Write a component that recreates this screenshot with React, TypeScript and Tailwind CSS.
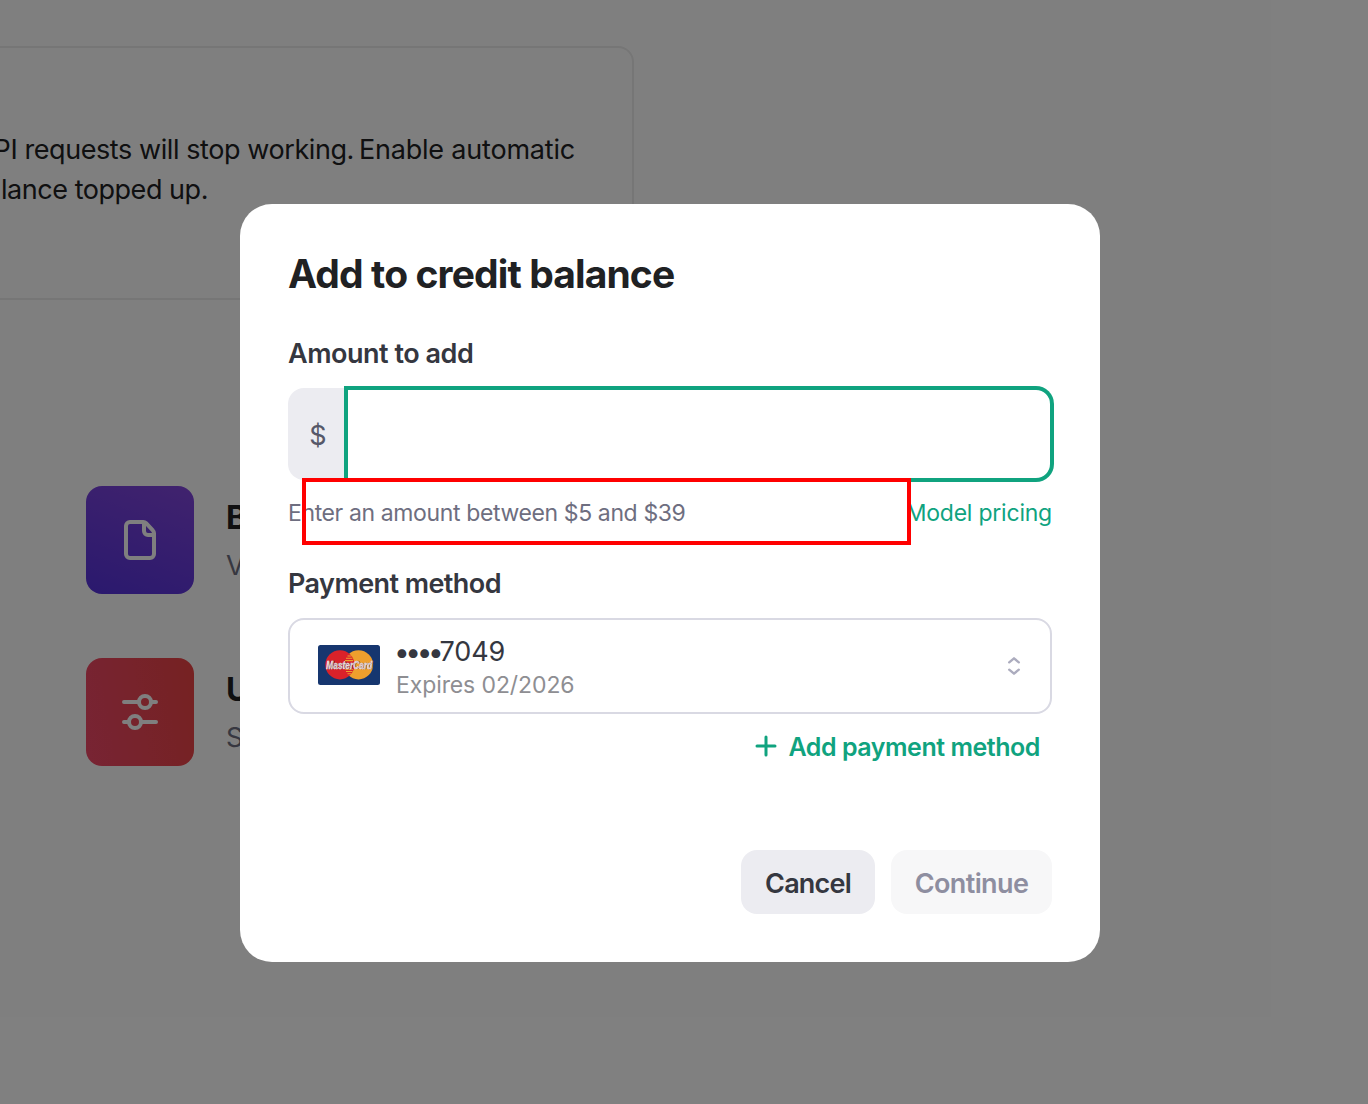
function FileIcon() {
  return (
    <svg width="48" height="48" viewBox="0 0 48 48" fill="none" stroke="white" strokeWidth="4">
      <path d="M14 6h13.2a4 4 0 0 1 2.9 1.2l6.7 7.2a4 4 0 0 1 1.2 2.9V38a4 4 0 0 1-4 4H14a4 4 0 0 1-4-4V10a4 4 0 0 1 4-4Z" />
      <path d="M28 6.5V15a4 4 0 0 0 4 4h5.5" />
    </svg>
  )
}

function SlidersIcon() {
  return (
    <svg width="48" height="48" viewBox="0 0 48 48" fill="none" stroke="white" strokeWidth="4" strokeLinecap="round">
      <path d="M8 14h15M36 14h4M8 34h4M26 34h14" />
      <circle cx="29" cy="14" r="6" />
      <circle cx="19" cy="34" r="6" />
    </svg>
  )
}

function MasterCardLogo() {
  return (
    <svg className="-mt-0.5 shrink-0" width="62" height="40" viewBox="0 0 62 40">
      <rect width="62" height="40" rx="2.5" fill="#16366f" />
      <circle cx="40.5" cy="19.8" r="14.6" fill="#ee9f2d" />
      <circle cx="21.9" cy="19.8" r="14.6" fill="#d9222a" />
      <path
        d="M29.5 11h4M28 13.3h6.4M27 15.6h8M27 24.2h8M28 26.5h6.4M29.5 28.8h4"
        stroke="#ee9f2d"
        strokeWidth="1.1"
      />
      <text
        x="8.3"
        y="23.6"
        textLength="46"
        lengthAdjust="spacingAndGlyphs"
        fill="white"
        stroke="white"
        strokeWidth="0.3"
        className="font-['Liberation_Sans',sans-serif] text-[10px] font-bold italic [text-shadow:0.7px_0.8px_0_#5a1420]"
      >
        MasterCard
      </text>
    </svg>
  )
}

function BackgroundPage() {
  return (
    <div className="h-full w-full overflow-hidden bg-white pt-[46px]">
      <section className="h-[254px] w-[634px] overflow-hidden rounded-r-2xl border-2 border-l-0 border-[#ececec] pt-[82px] text-[27px] leading-10 text-[#202123]">
        <div className="flex w-[575px] justify-end whitespace-nowrap">
          <span className="tracking-[-0.42px]">API requests will stop working.</span>
          <span className="ml-[5px] tracking-[-0.2px]">Enable automatic</span>
        </div>
        <div className="flex w-[208px] justify-end whitespace-nowrap tracking-[-0.46px]">balance topped up.</div>
      </section>

      <div className="mt-[186px] flex flex-col gap-16 pl-[86px]">
        <div className="flex gap-8">
          <div className="flex size-[108px] items-center justify-center rounded-2xl bg-linear-[20deg] from-[#5532dc] to-[#8246dc]">
            <FileIcon />
          </div>
          <div className="pt-2 leading-[48px]">
            <div className="text-[32px] font-bold text-[#202123]">B</div>
            <div className="text-[27px] text-[#6e6e80]">V</div>
          </div>
        </div>
        <div className="flex gap-8">
          <div className="flex size-[108px] items-center justify-center rounded-2xl bg-linear-[80deg] from-[#f04868] to-[#ec4444]">
            <SlidersIcon />
          </div>
          <div className="pt-2 leading-[48px]">
            <div className="text-[32px] font-bold text-[#202123]">U</div>
            <div className="text-[27px] text-[#6e6e80]">S</div>
          </div>
        </div>
      </div>
    </div>
  )
}

function CreditDialog() {
  return (
    <div className="h-[758px] w-[860px] rounded-[32px] bg-white px-12 pt-[46px] text-[#353740]">
      <h2 className="text-[39px] leading-[48px] font-bold tracking-[-0.88px] text-[#202123]">Add to credit balance</h2>

      <div className="mt-9 text-[27px] leading-10 font-semibold tracking-[-0.47px]">Amount to add</div>
      <div className="mt-[14px] flex h-[92px]">
        <div className="flex w-[58px] items-center justify-center rounded-l-2xl bg-[#ececf1] pt-1 pl-0.5 text-[27px] text-[#565869]">
          $
        </div>
        <div className="flex-1 rounded-r-2xl border-2 border-[#10a37f] bg-white shadow-[0_0_0_2px_#10a37f]" />
      </div>
      <div className="relative mt-[17px] flex justify-between text-[23px] leading-8">
        <span className="tracking-[-0.38px] text-[#6e6e80]">Enter an amount between $5 and $39</span>
        <span className="tracking-[-0.22px] text-[#10a37f]">Model pricing</span>
        <div className="absolute -top-[19px] left-[14px] h-[67px] w-[609px] border-4 border-[#ff0000]" />
      </div>

      <div className="mt-[35px] text-[27px] leading-10 font-semibold tracking-[-0.57px]">Payment method</div>
      <div className="mt-[14px] flex h-24 items-center rounded-2xl border-2 border-[#d9d9e3] pr-[29px] pl-7">
        <MasterCardLogo />
        <div className="ml-[17px] flex-1 pt-1">
          <div className="flex text-[27px] leading-[34px]">
            <span className="-ml-[3px] text-[28px] tracking-[-4.4px]">••••</span>
            <span className="tracking-[-0.05px]">7049</span>
          </div>
          <div className="-ml-px text-[23px] leading-8 tracking-[-0.1px] text-[#8e8e92]">Expires 02/2026</div>
        </div>
        <svg
          width="14"
          height="20"
          viewBox="0 0 14 20"
          fill="none"
          stroke="#acacbe"
          strokeWidth="2.4"
          strokeLinecap="round"
          strokeLinejoin="round"
        >
          <path d="M2.2 6.3L7 2.3l4.8 4M2.2 13.7l4.8 4l4.8-4" />
        </svg>
      </div>

      <div className="mt-4 flex h-8 items-center justify-end pr-3 text-[#10a37f]">
        <svg width="22" height="22" viewBox="0 0 22 22" fill="none" stroke="currentColor" strokeWidth="3" strokeLinecap="round">
          <path d="M11 2v18M2 11h18" />
        </svg>
        <span className="ml-[11px] pt-0.5 text-[25px] leading-8 font-semibold tracking-[-0.46px]">Add payment method</span>
      </div>

      <div className="mt-[88px] flex justify-end gap-4 text-[27px] font-semibold">
        <button className="h-16 w-[134px] rounded-2xl bg-[#ececf1] pt-[5px] tracking-[-0.8px] text-[#353740]">Cancel</button>
        <button className="h-16 w-[161px] rounded-2xl bg-[#f7f7f8] pt-[5px] tracking-[-0.6px] text-[#8e8ea0]">Continue</button>
      </div>
    </div>
  )
}

export default function App() {
  return (
    <div className="relative h-[1104px] w-[1368px] overflow-hidden font-['Inter','Liberation_Sans',sans-serif]">
      <BackgroundPage />
      <div className="absolute inset-0 bg-black/50 pt-[204px] pl-[240px]">
        <CreditDialog />
      </div>
    </div>
  )
}
